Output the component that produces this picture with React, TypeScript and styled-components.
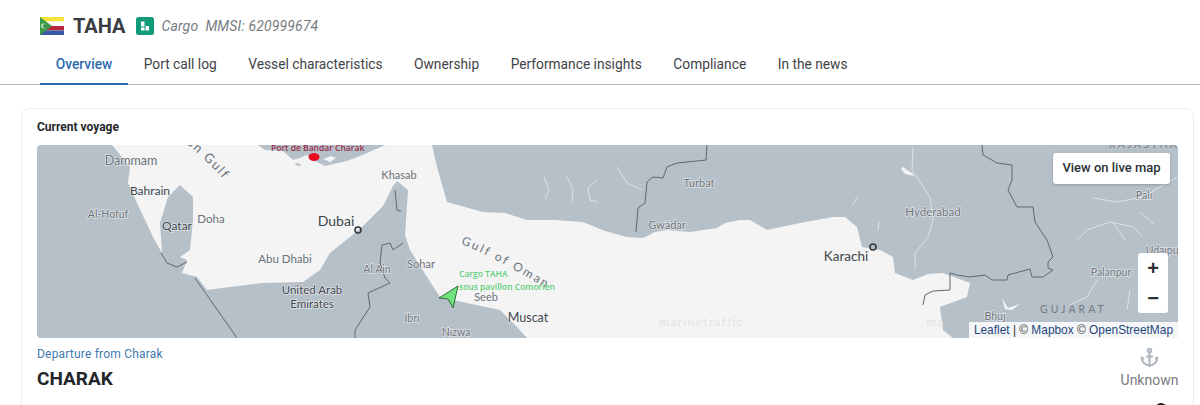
import React from "react";
import styled, { createGlobalStyle } from "styled-components";
import { Anchor } from "lucide-react";

const Global = createGlobalStyle`
  html, body { margin: 0; padding: 0; background: #fff; height: 405px; overflow: hidden; }
  body { font-family: Roboto, "Liberation Sans", sans-serif; }
  * { box-sizing: border-box; }
`;
const Page = styled.div`width: 1200px; height: 405px; overflow: hidden; background: #fff;`;
const Header = styled.header`padding: 14px 0 0 0; border-bottom: 1px solid #b4b6b9;`;
const TitleRow = styled.div`display: flex; align-items: center; height: 24px; padding-left: 40px;`;
const VesselName = styled.h1`margin: 0 0 0 9px; font-size: 20px; line-height: 24px; font-weight: 700; color: #383c42;`;
const Badge = styled.svg`margin-left: 10px; display: block;`;
const Meta = styled.span`margin-left: 8px; font-size: 14px; font-style: italic; color: #777b80; white-space: pre; letter-spacing: .13px;`;
const Tabs = styled.nav`display: flex; margin-top: 6px; padding-left: 40px; height: 40px;`;
const Tab = styled.a<{ $active?: boolean }>`
  padding: 0 15.75px; margin-bottom: -1px; display: flex; align-items: center; height: 41px; font-size: 13.75px;
  font-weight: ${p => (p.$active ? 500 : 400)}; color: ${p => (p.$active ? "#2a6bb0" : "#3f4348")};
  border-bottom: 2px solid ${p => (p.$active ? "#2a6bb0" : "transparent")};
`;
const Card = styled.section`margin: 23px 6px 0 21px; padding: 10px 15px 0; border: 1px solid #ebedef; border-radius: 8px; height: 320px;`;
const CardTitle = styled.h2`margin: 0 0 10px; font-size: 12px; line-height: 16px; font-weight: 700; color: #24272b;`;
const MapBox = styled.div`position: relative; width: 1141px; height: 193px; border-radius: 4px; overflow: hidden; background: #b6c0c9;`;
const MapSvg = styled.svg`display: block; font-family: Lato, Roboto, sans-serif;`;
const LiveButton = styled.button`
  position: absolute; top: 8px; right: 8px; width: 117px; height: 31px; border: 0; border-radius: 3px; background: #fff; padding: 0 0 2px;
  font: 500 13px Roboto, sans-serif; color: #2c3035; box-shadow: 0 1px 3px rgba(0,0,0,.2);
`;
const Zoom = styled.div`position: absolute; left: 1101px; top: 108px; width: 30px; height: 60px; background: #fff; border-radius: 3px; display: flex; flex-direction: column;`;
const ZoomButton = styled.span`flex: 1; display: flex; align-items: center; justify-content: center; font: 700 20px "Liberation Sans", sans-serif; color: #2c3035;`;
const Attribution = styled.div`
  position: absolute; right: 0; bottom: 0; height: 16px; padding: 0 5px; background: rgba(255,255,255,.85);
  font: 11.9px/16px "Liberation Sans", sans-serif; color: #333; white-space: nowrap;
`;
const AttrLink = styled.span`color: #27477c;`;
const Voyage = styled.div`display: flex; justify-content: space-between; margin-top: 9px;`;
const Departure = styled.div`display: flex; flex-direction: column;`;
const DepartureLabel = styled.span`font-size: 12px; line-height: 15px; color: #3f78b0; letter-spacing: .2px;`;
const Port = styled.strong`margin-top: 5px; font-size: 19px; line-height: 24px; font-weight: 700; color: #22262a;`;
const Status = styled.div`display: flex; flex-direction: column; align-items: center; width: 57px; color: #b0b8c0;`;
const StatusText = styled.span`margin-top: 3px; font-size: 14px; line-height: 18px; color: #777b80;`;
const NextRow = styled.div`display: flex; justify-content: flex-end; padding-right: 11px; margin-top: 12px;`;
const Dot = styled.span`width: 12px; height: 12px; border-radius: 50%; background: #1d2024;`;

const sea = "M112 145L258 145L265 150L283 151L293 160L300 158L307 155L313 160L325 166L347 161L360 156L383 146L385 145L432 145L437 167L447 202L465 207L483 212L505 213L527 220L555 220L583 222L605 231L627 237L643 238L655 232L667 230L690 232L717 228L725 223L740 220L750 220L767 230L800 223L833 217L845 217L857 227L862 247L880 250L893 257L895 273L913 280L928 274L943 273L970 283L967 297L940 307L943 330L953 338L527 338L517 327L500 310L467 303L440 297L427 277L410 250L405 235L407 206L408 190L397 181L393 186L383 206L363 226L350 237L330 253L320 270L303 282L263 283L230 287L207 290L197 277L182 273L187 260L180 257L190 250L193 220L193 197L180 185L168 197L160 223L162 253L153 237L137 203L128 183L130 167Z";

const borders = [
  "M195 278L237 338",
  "M161 253L167 263L177 267L187 262",
  "M355 338L355 330L370 307L368 293L390 283L385 278L380 263L382 245L390 243L393 250L403 243",
  "M395 190L397 210L401 211",
  "M707 145L706 160L677 163L667 167L663 178L653 177L647 182L645 203L638 208L636 232",
  "M982 145L983 155L997 163L1012 165L1012 180L1008 190L1017 207L1033 207L1035 222L1047 240L1053 257L1048 262L1048 268L1053 270L1043 277L1032 277L1030 269L1008 275L1007 280L992 280L985 275L970 277L957 275L950 273L950 290L933 291L925 295L923 305",
];
const rivers = [
  "M544 177L549 190L545 199", "M567 177L573 190L572 203", "M598 179L588 188L590 200L598 202", "M617 167L627 183L642 190",
  "M913 147L912 170L930 197L933 220L928 237L915 253L915 270", "M1093 198L1117 202L1143 197L1177 177",
  "M1077 240L1087 230L1110 222L1133 227L1143 237", "M1113 223L1125 240", "M1140 212L1155 225",
  "M1097 280L1087 297L1070 305", "M1130 290L1127 310", "M857 197L853 205", "M879 222L878 230",
];

type L = [string, number, number, number, boolean?];
const labels: L[] = [
  ["Dammam", 131, 165, 12.5], ["Bahrain", 150, 195, 12, true], ["Al-Hofuf", 108, 218, 10.5], ["Qatar", 177, 230, 12, true],
  ["Doha", 211, 223, 11.5], ["Dubai", 336, 226, 14, true], ["Abu Dhabi", 285, 263, 11.5], ["United Arab", 312, 294, 11.5, true],
  ["Emirates", 312, 308, 11.5, true], ["Al Ain", 377, 273, 10.5], ["Sohar", 421, 268, 11], ["Ibri", 412, 322, 10.5],
  ["Nizwa", 456, 336, 10.5], ["Seeb", 486, 301, 11], ["Muscat", 528, 322, 12.5, true], ["Khasab", 399, 179, 11],
  ["Turbat", 699, 187, 11], ["Gwādar", 667, 229, 11], ["Hyderabad", 933, 216, 11.5], ["Karachi", 846, 261, 13.5, true],
  ["Pali", 1144, 199, 10.5], ["Palanpur", 1111, 276, 10.5], ["Udaipur", 1164, 254, 10.5], ["Bhuj", 995, 320, 10.5],
];

export default function App() {
  return (
    <Page>
      <Global />
      <Header>
        <TitleRow>
          <svg width="24" height="18" viewBox="0 0 24 18">
            <rect width="24" height="4.5" fill="#f5e33a" />
            <rect y="4.5" width="24" height="4.5" fill="#fbfbfb" />
            <rect y="9" width="24" height="4.5" fill="#b5263f" />
            <rect y="13.5" width="24" height="4.5" fill="#3a58a8" />
            <path d="M0 0L12 9L0 18Z" fill="#3d9a48" />
            <circle cx="3.6" cy="9" r="2.4" fill="#e8f2e6" />
            <circle cx="4.6" cy="9" r="2.1" fill="#3d9a48" />
          </svg>
          <VesselName>TAHA</VesselName>
          <Badge width="18" height="18" viewBox="0 0 18 18">
            <rect width="18" height="18" rx="2.5" fill="#129b79" />
            <path d="M5 4.5h3.5v5H5zM5 10.5h3.5v3H5zM9.5 9h3.5v4.5H9.5z" fill="#fff" />
          </Badge>
          <Meta>Cargo  MMSI: 620999674</Meta>
        </TitleRow>
        <Tabs>
          <Tab $active>Overview</Tab>
          <Tab>Port call log</Tab>
          <Tab>Vessel characteristics</Tab>
          <Tab>Ownership</Tab>
          <Tab>Performance insights</Tab>
          <Tab>Compliance</Tab>
          <Tab>In the news</Tab>
        </Tabs>
      </Header>
      <Card>
        <CardTitle>Current voyage</CardTitle>
        <MapBox>
          <MapSvg width="1141" height="193" viewBox="37 145 1141 193">
            <path d={sea} fill="#f4f4f4" />
            <path d="M323 159l8-3 5 2-6 4zM357 163L392 147L372 160Z" fill="#f4f4f4" />
            <path d="M296 163l5 1-1 2-5-1z" fill="#b6c0c9" />
            <path d="M903 167l9 6 2 3-9-2-4-5zM1002 298l6 10 12-4-8 6-7-1z" fill="#f4f4f4" />
            {rivers.map(d => <path key={d} d={d} fill="none" stroke="#eef1f3" strokeWidth=".8" strokeOpacity=".85" />)}
            {borders.map(d => <path key={d} d={d} fill="none" stroke="#5e6871" strokeWidth="1" strokeLinejoin="round" />)}
            <circle cx="358" cy="230" r="3" fill="none" stroke="#33383d" strokeWidth="1.6" />
            <circle cx="873" cy="247" r="3" fill="none" stroke="#33383d" strokeWidth="1.6" />
            {labels.map(([t, x, y, s, dark]) => (
              <text key={t} x={x} y={y} fontSize={s} textAnchor="middle" fill={dark ? "#3f464d" : "#6b737b"}
                stroke="#f4f4f4" strokeWidth="1.4" strokeOpacity=".7" paintOrder="stroke">{t}</text>
            ))}
            <text x="1040" y="313" fontSize="10.5" letterSpacing="3" fill="#737b83">GUJARAT</text>
            <text x="1109" y="148" fontSize="10" letterSpacing="2.6" fill="#737b83">RAJASTHAN</text>
            <defs>
              <path id="oman" d="M461 244Q505 262 565 300" />
              <path id="persian" d="M120 100Q185 135 224 180" />
            </defs>
            <text fontSize="12" letterSpacing="2.2" fill="#6b737b"><textPath href="#oman">Gulf of Oman</textPath></text>
            <text fontSize="13" letterSpacing="1.6" fill="#6b737b" textAnchor="end"><textPath href="#persian" startOffset="100%">Persian Gulf</textPath></text>
            <text x="659" y="326" fontSize="12" fontWeight="700" letterSpacing="1.2" fill="#e6e6e6">marinetraffic</text>
            <text x="926" y="326" fontSize="12" fontWeight="700" letterSpacing="1.2" fill="#e6e6e6">ma</text>
            <text x="271" y="151" fontSize="8.5" fontWeight="600" fontFamily="Open Sans, sans-serif" fill="#96304a">Port de Bandar Charak</text>
            <ellipse cx="314" cy="157" rx="5.5" ry="4" fill="#e8091f" />
            <text x="459" y="277" fontSize="8.5" fontWeight="600" fontFamily="Open Sans, sans-serif" fill="#5dcf7c">Cargo TAHA</text>
            <text x="459" y="290" fontSize="8.5" fontWeight="600" fontFamily="Open Sans, sans-serif" fill="#5dcf7c">sous pavillon Comorien</text>
            <path d="M458 286L439 298L448 299L453 308Z" fill="#72e27e" stroke="#2c7038" strokeWidth="1" strokeLinejoin="round" />
          </MapSvg>
          <LiveButton>View on live map</LiveButton>
          <Zoom>
            <ZoomButton>+</ZoomButton>
            <ZoomButton>−</ZoomButton>
          </Zoom>
          <Attribution><AttrLink>Leaflet</AttrLink> | © <AttrLink>Mapbox</AttrLink> © <AttrLink>OpenStreetMap</AttrLink></Attribution>
        </MapBox>
        <Voyage>
          <Departure>
            <DepartureLabel>Departure from Charak</DepartureLabel>
            <Port>CHARAK</Port>
          </Departure>
          <Status>
            <Anchor size={21} strokeWidth={2.4} />
            <StatusText>Unknown</StatusText>
          </Status>
        </Voyage>
        <NextRow><Dot /></NextRow>
      </Card>
    </Page>
  );
}
